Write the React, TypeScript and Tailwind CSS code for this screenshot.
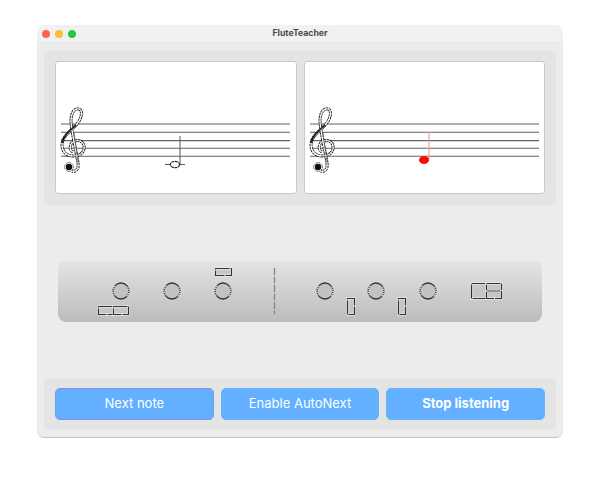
const DARK = "#333333";

function TrebleClef() {
  const d =
    "M73 152C69 150 69 143 75 141C81 139 85 144 84 149C83 154 78 156 73 156C66 156 62 151 62 145C62 136 72 130 77 124C82 118 83 110 79 109C74 108 71 114 71 120C71 130 76 150 78 163C79 170 75 172 72 171";
  return (
    <g transform="translate(-55 -62)" fill="none">
      <path d={d} stroke="#1c1c1c" strokeWidth="3" strokeDasharray="2.2 0.6" />
      <path d={d} stroke="#fff" strokeWidth="1.2" />
      <path d="M62.5 143C63 135 71 130 76 125" stroke="#1c1c1c" strokeWidth="1.6" />
      <path d="M74 132L78 163" stroke="#666" strokeWidth="0.8" />
      <circle cx="69" cy="167" r="3.2" fill="#111" />
      <circle cx="69" cy="167" r="4.4" stroke="#333" strokeWidth="0.8" strokeDasharray="1.5 0.8" />
    </g>
  );
}

function StaffCard({ children }: { children: React.ReactNode }) {
  return (
    <div className="w-[242px] h-[133px] bg-white border border-[#c9c9c9] rounded-[3px] overflow-hidden">
      <svg width="240" height="131" viewBox="1 0 240 131" className="block">
        {[62, 70.3, 78.6, 86.3, 94.3].map((y) => (
          <line key={y} x1="6" x2="235" y1={y} y2={y} stroke="#626262" strokeWidth="1.1" />
        ))}
        <TrebleClef />
        {children}
      </svg>
    </div>
  );
}

function Hole({ cx }: { cx: number }) {
  return (
    <g>
      <circle cx={cx} cy="30" r="8" fill="#c2c2c2" stroke={DARK} strokeWidth="1.3" />
      <circle
        cx={cx}
        cy="30"
        r="8"
        fill="none"
        stroke="#f2f2f2"
        strokeWidth="1.3"
        pathLength={100}
        strokeDasharray="2 2.5 2 2.5 2 2.5 2 2.5 2 30"
        strokeDashoffset="9"
      />
    </g>
  );
}

function Key({ x, y, w, h }: { x: number; y: number; w: number; h: number }) {
  return (
    <g>
      <rect x={x} y={y} width={w} height={h} fill="#c6c6c6" stroke="#f6f6f6" strokeWidth="2" />
      <rect x={x} y={y} width={w} height={h} fill="none" stroke={DARK} strokeWidth="1.2" strokeDasharray="14 1" />
    </g>
  );
}

function FluteDiagram() {
  return (
    <svg width="484" height="61" viewBox="0 0 484 61" className="block">
      <Hole cx={63} />
      <Hole cx={114} />
      <Hole cx={165} />
      <Hole cx={267} />
      <Hole cx={318} />
      <Hole cx={370} />
      <Key x={40.5} y={45.5} w={15} h={8} />
      <Key x={55.5} y={45.5} w={15} h={8} />
      <Key x={157.5} y={7.5} w={16} h={7} />
      <Key x={289.5} y={37.5} w={7} h={16} />
      <Key x={340.5} y={37.5} w={7} h={16} />
      <Key x={413.5} y={22.5} w={15} h={15} />
      <Key x={428.5} y={22.5} w={15} h={7.5} />
      <Key x={428.5} y={30} w={15} h={7.5} />
      <line x1="216.5" x2="216.5" y1="7" y2="53" stroke="#858585" strokeWidth="1.3" strokeDasharray="7 1.5" />
    </svg>
  );
}

function ActionButton({ label, active, bold }: { label: string; active?: boolean; bold?: boolean }) {
  return (
    <button
      className={`flex-1 h-8 rounded-[5px] bg-[#62b0ff] border text-white text-[13px] ${
        active ? "border-[#7b9be0]" : "border-[#6ab3fb]"
      } ${bold ? "font-bold" : "font-normal"}`}
    >
      {label}
    </button>
  );
}

export default function App() {
  return (
    <div className="w-[600px] h-[487px] bg-white pt-[25px] pl-[37px] font-['Inter',sans-serif]">
      <div className="w-[526px] h-[413px] flex flex-col bg-[#ececec] rounded-lg border-b border-[#c4c4c4] overflow-hidden">
        <div className="relative h-[18px] shrink-0 flex items-center justify-center bg-[#f0f1f2] border-b border-[#e6e6e6]">
          <div className="absolute left-[5px] top-[5px] flex gap-[5px]">
            <span className="w-2 h-2 rounded-full bg-[#ff5f57]" />
            <span className="w-2 h-2 rounded-full bg-[#febc2e]" />
            <span className="w-2 h-2 rounded-full bg-[#28c840]" />
          </div>
          <span className="text-[8.7px] font-bold text-[#4a4a4a]">FluteTeacher</span>
        </div>

        <div className="flex-1 flex flex-col justify-between px-[7px] pt-[8px] pb-[7px]">
          <div className="h-[154px] flex items-start gap-[7px] px-[11px] pt-[10px] bg-[#e4e4e4] rounded-[3px]">
            <StaffCard>
              <line x1="110" x2="130" y1="102.5" y2="102.5" stroke="#555" strokeWidth="1" />
              <line x1="125" x2="125" y1="74" y2="102" stroke="#555" strokeWidth="1" />
              <ellipse cx="120" cy="102.5" rx="4.6" ry="3.2" fill="#fff" stroke="#222" strokeWidth="1.2" strokeDasharray="3 0.6" />
            </StaffCard>
            <StaffCard>
              <line x1="125" x2="125" y1="70" y2="97" stroke="#fb9a9a" strokeWidth="1.2" />
              <ellipse cx="120" cy="98" rx="5" ry="4" fill="#fb0a0a" />
            </StaffCard>
          </div>

          <div className="mx-[14px] h-[61px] rounded-lg bg-linear-to-b from-[#e4e4e4] to-[#bcbcbc]">
            <FluteDiagram />
          </div>

          <div className="h-[52px] flex items-center gap-[7px] px-[11px] bg-[#e4e4e4] rounded-[3px]">
            <ActionButton label="Next note" active />
            <ActionButton label="Enable AutoNext" />
            <ActionButton label="Stop listening" bold />
          </div>
        </div>
      </div>
    </div>
  );
}
